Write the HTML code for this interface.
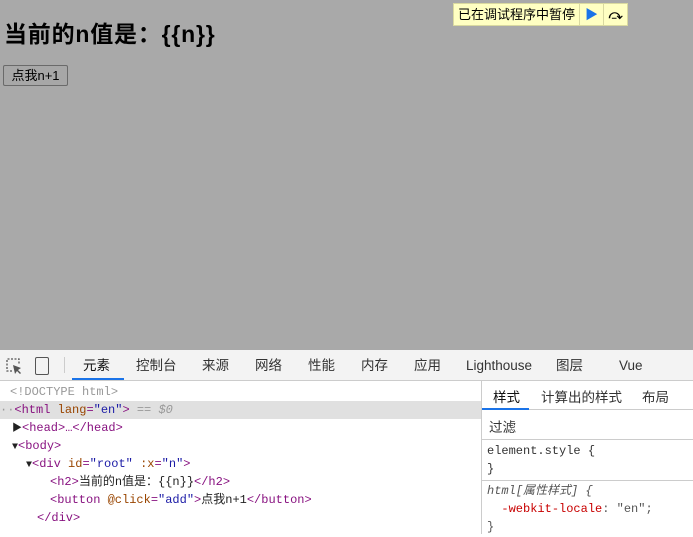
<!DOCTYPE html>
<html><head><meta charset="utf-8"><style>
*{margin:0;padding:0;box-sizing:border-box}
body{width:693px;height:534px;overflow:hidden;position:relative;font-family:"Liberation Sans","Noto Sans CJK SC",sans-serif;background:#fff}
.page{position:absolute;left:0;top:0;width:693px;height:350px;background:#a9a9a9}
h2{position:absolute;left:4px;top:15px;font-size:23px;font-weight:bold;color:#000;letter-spacing:0.8px}
.btn{position:absolute;left:3px;top:65px;width:65px;height:21px;border:1px solid #6a6a6a;border-radius:2px;background:#a7a7a7;font-size:13px;text-align:center;line-height:19px}
.pause{position:absolute;left:453px;top:3px;height:23px;background:#ffffc2;border:1px solid #d9d9a0;display:flex;font-size:13px;line-height:21px}
.pause span{padding:0 4px}
.pause div{width:24px;border-left:1px solid #d9d9a0}
.tabs{position:absolute;top:350px;left:0;width:693px;height:31px;background:#f3f3f3;border-bottom:1px solid #ccc;font-size:13.5px;color:#333}
.tabs span{position:absolute;top:0;line-height:31px;height:31px}
.left{position:absolute;top:383px;left:0;width:481px;height:151px;font-family:"Liberation Mono","Noto Sans CJK SC",monospace;font-size:12px;line-height:18px}
.left div{height:18px;white-space:pre;color:#881280;position:relative}
.a{color:#994500}.v{color:#1a1aa6}.g{color:#999}.k{color:#222}
.right{position:absolute;top:381px;left:481px;width:212px;height:153px;border-left:1px solid #ccc;font-size:13.5px}
</style></head><body>
<div class="page">
<h2>当前的n值是：{{n}}</h2>
<div class="btn">点我n+1</div>
<div class="pause"><span>已在调试程序中暂停</span><div style="color:#1a73e8;font-size:13px;text-align:center">▶</div><div style="text-align:center;font-weight:bold">⤼</div></div>
</div>
<div class="tabs">
<svg style="position:absolute;left:5px;top:7px" width="18" height="18" viewBox="0 0 18 18"><path d="M7 14H2V2h12v5" fill="none" stroke="#555" stroke-width="1.3" stroke-dasharray="2 1.5"/><path d="M8 8l2 9 2-3 3 3 1-1-3-3 3-2z" fill="#555"/></svg>
<div style="position:absolute;left:35px;top:7px;width:14px;height:18px;border:1.5px solid #555;border-radius:2px"></div>
<div style="position:absolute;left:64px;top:7px;width:1px;height:16px;background:#ccc"></div>
<span style="left:83px;color:#111">元素</span>
<div style="position:absolute;left:72px;top:28px;width:52px;height:2px;background:#1a73e8"></div>
<span style="left:136px">控制台</span>
<span style="left:202px">来源</span>
<span style="left:255px">网络</span>
<span style="left:308px">性能</span>
<span style="left:361px">内存</span>
<span style="left:414px">应用</span>
<span style="left:466px">Lighthouse</span>
<span style="left:556px">图层</span>
<span style="left:619px">Vue</span>
</div>
<div class="left">
<div class="g" style="left:10px;color:#999">&lt;!DOCTYPE html&gt;</div>
<div style="background:#e0e0e0"><span class="g">··</span>&lt;html <span class="a">lang</span>=<span class="v">"en"</span>&gt; <span class="g">== <i>$0</i></span></div>
<div style="left:12px"><span class="k" style="font-size:10px">▶</span>&lt;head&gt;…&lt;/head&gt;</div>
<div style="left:12px"><span class="k" style="font-size:10px">▼</span>&lt;body&gt;</div>
<div style="left:26px"><span class="k" style="font-size:10px">▼</span>&lt;div <span class="a">id</span>=<span class="v">"root"</span> <span class="a">:x</span>=<span class="v">"n"</span>&gt;</div>
<div style="left:50px">&lt;h2&gt;<span class="k">当前的n值是：{{n}}</span>&lt;/h2&gt;</div>
<div style="left:50px">&lt;button <span class="a">@click</span>=<span class="v">"add"</span>&gt;<span class="k">点我n+1</span>&lt;/button&gt;</div>
<div style="left:37px">&lt;/div&gt;</div>
</div>
<div class="right">
<div style="height:29px;border-bottom:1px solid #ccc;position:relative;color:#333">
<span style="position:absolute;left:11px;top:5px;color:#111">样式</span>
<div style="position:absolute;left:0;top:27px;width:47px;height:2px;background:#1a73e8"></div>
<span style="position:absolute;left:59px;top:5px">计算出的样式</span>
<span style="position:absolute;left:160px;top:5px">布局</span>
</div>
<div style="height:30px;border-bottom:1px solid #ccc;padding:6px 7px;color:#333">过滤</div>
<div style="font-family:'Liberation Mono',monospace;font-size:12px;line-height:18px;padding:2px 5px;border-bottom:1px solid #ccc;color:#333">element.style {<br>}</div>
<div style="font-family:'Liberation Mono','Noto Sans CJK SC',monospace;font-size:12px;line-height:18px;padding:1px 5px;color:#555"><i>html[属性样式] {</i><br>&nbsp;&nbsp;<span style="color:#c80000">-webkit-locale</span>: "en";<br>}</div>
</div>
</body></html>
